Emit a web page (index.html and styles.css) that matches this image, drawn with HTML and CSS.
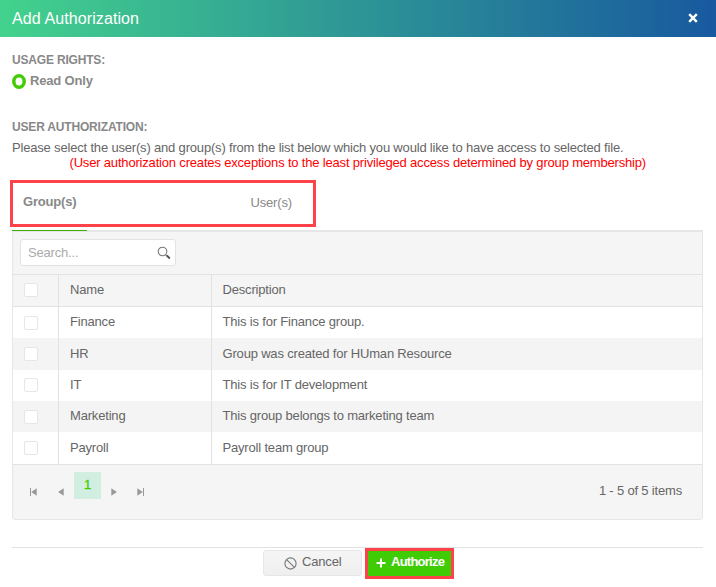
FILE: index.html
```html
<!DOCTYPE html>
<html lang="en">
<head>
<meta charset="utf-8">
<title>Add Authorization</title>
<link rel="stylesheet" href="styles.css">
</head>
<body>
<header class="titlebar">
  <h1>Add Authorization</h1>
  <svg class="close" width="10" height="10" viewBox="0 0 10 10"><path d="M1.2 1.2 8.8 8.8M8.8 1.2 1.2 8.8"/></svg>
</header>
<main class="content">
  <h2 class="usage">USAGE RIGHTS:</h2>
  <label class="radio"><svg class="dot" width="14" height="15" viewBox="0 0 14 15"><ellipse cx="7" cy="7.5" rx="5.2" ry="5.7"/></svg><span>Read Only</span></label>
  <h2 class="userauth">USER AUTHORIZATION:</h2>
  <p class="intro">Please select the user(s) and group(s) from the list below which you would like to have access to selected file.</p>
  <p class="warning">(User authorization creates exceptions to the least privileged access determined by group membership)</p>
  <nav class="tabs">
    <span class="tab active">Group(s)</span>
    <span class="tab">User(s)</span>
  </nav>
  <section class="grid">
    <div class="toolbar">
      <div class="search">
        <span>Search...</span>
        <svg width="14" height="14" viewBox="0 0 14 14"><circle cx="5.5" cy="5.5" r="4.3"/><path d="m8.6 8.6 1.5 1.5"/><path class="handle" d="m9.8 9.6 3 2.8"/></svg>
      </div>
    </div>
    <div class="row head"><div><i></i></div><div>Name</div><div>Description</div></div>
    <div class="row"><div><i></i></div><div>Finance</div><div>This is for Finance group.</div></div>
    <div class="row alt tall"><div><i></i></div><div>HR</div><div>Group was created for HUman Resource</div></div>
    <div class="row raised"><div><i></i></div><div>IT</div><div>This is for IT development</div></div>
    <div class="row alt"><div><i></i></div><div>Marketing</div><div>This group belongs to marketing team</div></div>
    <div class="row tall"><div><i></i></div><div>Payroll</div><div>Payroll team group</div></div>
    <footer class="pager">
      <svg class="first" width="7" height="8" viewBox="0 0 7 8"><path d="M0 0h1v8H0zM6.7.3v7.4L1.2 4z"/></svg>
      <svg class="prev" width="6" height="8" viewBox="0 0 6 8"><path d="M5.7.3v7.4L.1 4z"/></svg>
      <span class="page">1</span>
      <svg class="next" width="6" height="8" viewBox="0 0 6 8"><path d="M.3.3v7.4L5.9 4z"/></svg>
      <svg class="last" width="7" height="8" viewBox="0 0 7 8"><path d="M6 0h1v8H6zM.3.3v7.4L5.8 4z"/></svg>
      <span class="count">1 - 5 of 5 items</span>
    </footer>
  </section>
  <div class="actions">
    <div class="btn cancel"><svg width="13" height="13" viewBox="0 0 13 13"><circle cx="6.5" cy="6.5" r="5.6"/><path d="m2.6 2.6 7.8 7.8"/></svg><span>Cancel</span></div>
    <div class="btn authorize"><svg width="10" height="10" viewBox="0 0 10 10"><path d="M5 .5v9M.5 5h9"/></svg><span>Authorize</span></div>
  </div>
</main>
</body>
</html>
```
FILE: styles.css
```css
*, *::before { box-sizing: border-box; }
body {
  margin: 0;
  background: #fff;
  color: #666;
  font: 13px/15px "Liberation Sans", Arial, sans-serif;
  letter-spacing: -0.18px;
}
h1, h2, p { margin: 0; }
svg { display: block; flex: none; }
.titlebar {
  height: 37px;
  padding: 0 18px 0 12px;
  display: flex;
  align-items: center;
  justify-content: space-between;
  background: linear-gradient(90deg, #43d28d, #18599f);
  color: #fff;
}
h1 { font-size: 16px; font-weight: 400; line-height: 20px; letter-spacing: 0.1px; }
.close { margin-top: -1px; fill: none; stroke: #fff; stroke-width: 2.4; }
.content { padding: 0 13px 0 12px; }
h2 { font-size: 12px; font-weight: 700; color: #888; }
.usage { margin-top: 16px; }
.radio {
  display: flex;
  height: 16px;
  margin-top: 5px;
  font-weight: 700;
  color: #888;
}
.dot {
  margin: 1px 4px 0 0;
  fill: none;
  stroke: #44cc08;
  stroke-width: 3.5;
}
.userauth { margin-top: 31px; }
.intro { margin-top: 5px; white-space: nowrap; }
.warning { padding-left: 57.5px; color: #f00; white-space: nowrap; }
.tabs {
  position: relative;
  height: 60px;
  display: flex;
  padding: 24px 0 0 11px;
}
.tabs::before {
  content: "";
  position: absolute;
  left: -2px;
  top: 10px;
  width: 306px;
  height: 47px;
  border: 3px solid #fc4349;
}
.tab { width: 227.5px; color: #888; padding-top: 1px; }
.tab.active { font-weight: 700; padding-top: 0; }
.grid {
  position: relative;
  height: 290px;
  border: 1px solid #e6e6e6;
  border-top-width: 2px;
  border-radius: 0 0 4px 4px;
  background: #f5f5f5;
}
.grid::before {
  content: "";
  position: absolute;
  left: -1px;
  top: -2px;
  width: 75px;
  height: 1px;
  background: #3fae0a;
}
.toolbar { height: 42px; padding: 7px; }
.search {
  width: 156px;
  height: 27px;
  padding: 0 4px 0 7px;
  display: flex;
  align-items: center;
  justify-content: space-between;
  border: 1px solid #e2e2e2;
  border-radius: 3px;
  background: #fff;
  color: #aaa;
}
.search svg { fill: none; stroke: #777; stroke-width: 1.1; }
.search .handle { stroke: #555; stroke-width: 2; }
.row {
  display: grid;
  grid-template-columns: 45px 153px 1fr;
  height: 31px;
  background: #fff;
}
.row.tall { height: 32px; }
.row.alt { background: #f4f4f4; }
.row.head {
  height: 33px;
  background: #f5f5f5;
  border-top: 1px solid #e2e2e2;
  border-bottom: 1px solid #e2e2e2;
}
.row > div { padding: 7px 0 0 11px; border-left: 1px solid #e2e2e2; }
.row > div:last-child { padding-left: 10.5px; }
.row.tall > div { padding-top: 8px; }
.row > div:first-child { border-left: 0; padding-top: 9px; }
.row.head > div:first-child,
.row.raised > div:first-child { padding-top: 8px; }
.row i {
  display: block;
  width: 14px;
  height: 14px;
  border: 1px solid #e6e6e6;
  border-radius: 2px;
  background: #fff;
}
.pager {
  height: 55px;
  border-top: 1px solid #e2e2e2;
  display: flex;
  padding: 7px 20px 0 17px;
}
.pager svg { margin-top: 16px; fill: #999; }
.pager .prev { margin-left: 21px; }
.page {
  width: 27px;
  height: 27px;
  margin-left: 10px;
  padding-top: 5px;
  text-align: center;
  background: #d2eee1;
  color: #40cc00;
  -webkit-text-stroke: 0.3px #40cc00;
}
.pager .next { margin-left: 10px; }
.pager .last { margin-left: 20px; }
.count { margin: 11px 0 0 auto; }
.actions {
  height: 32px;
  margin-top: 27px;
  border-top: 1px solid #e2e2e2;
  display: flex;
  padding-left: 251px;
}
.btn { display: flex; white-space: nowrap; }
.cancel {
  width: 99px;
  height: 26px;
  margin: 2px 3px 0 0;
  padding: 3px 0 0 20px;
  border: 1px solid #e6e6e6;
  border-radius: 3px;
  background: linear-gradient(#f5f5f5, #efefef);
}
.cancel svg { margin: 3px 5px 0 0; fill: none; stroke: #777; stroke-width: 1.1; }
.authorize {
  width: 89px;
  height: 31px;
  padding: 3px 0 0 8px;
  border: 3px solid #fc4349;
  background: #3fcc05;
  color: #fff;
  font-weight: 700;
  letter-spacing: -0.75px;
}
.authorize svg { margin: 4px 5px 0 0; stroke: #fff; stroke-width: 2; }
```
